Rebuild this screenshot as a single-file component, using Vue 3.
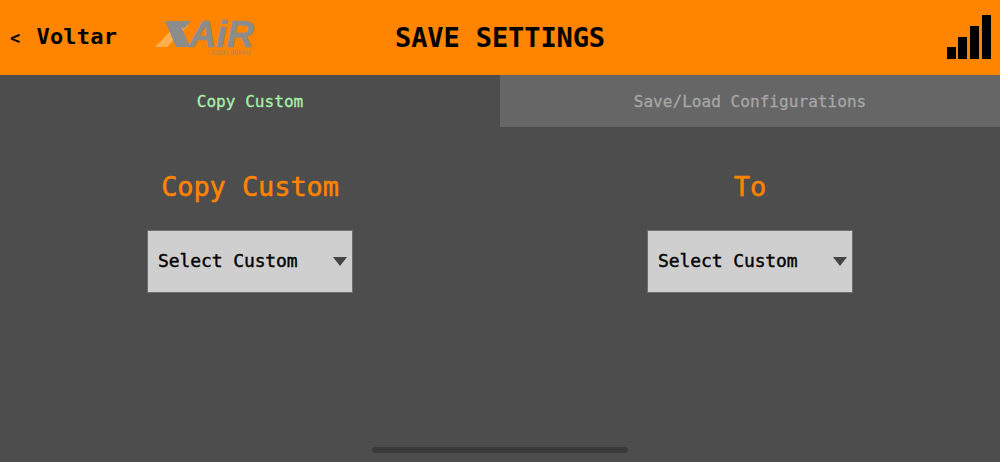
<script setup>
const tabs = [
  { label: 'Copy Custom', active: true },
  { label: 'Save/Load Configurations', active: false }
]
const columns = [
  { title: 'Copy Custom' },
  { title: 'To' }
]
const bars = [
  { x: 0, y: 32, h: 12 },
  { x: 11, y: 22, h: 22 },
  { x: 23, y: 11, h: 33 },
  { x: 35, y: 0, h: 44 }
]
</script>

<template>
  <div class="page">
    <header class="topbar">
      <a class="back"><span class="chevron">&lt;</span>Voltar</a>
      <svg class="logo" width="110" height="60" viewBox="0 -10 110 60">
        <polygon points="0,27 12,27 33,6 25,1" fill="#ffb04d" />
        <polygon points="10,1 24,1 35,27 21,27" fill="#8c8c8c" />
        <polygon points="24,1 36,1 29,9 25,6" fill="#8c8c8c" />
        <text x="34" y="27" textLength="65" lengthAdjust="spacingAndGlyphs" class="logo-word">AiR</text>
        <text x="55" y="35" textLength="41" lengthAdjust="spacingAndGlyphs" class="logo-small">32bits 96KHz</text>
      </svg>
      <h1 class="title">SAVE SETTINGS</h1>
      <svg class="signal" width="44" height="44" viewBox="0 0 44 44">
        <rect v-for="b in bars" :key="b.x" :x="b.x" :y="b.y" width="9" :height="b.h" fill="#000" />
      </svg>
    </header>

    <nav class="tabs">
      <div v-for="tab in tabs" :key="tab.label" class="tab" :class="{ active: tab.active }">{{ tab.label }}</div>
    </nav>

    <main class="columns">
      <section v-for="col in columns" :key="col.title" class="column">
        <h2 class="col-title">{{ col.title }}</h2>
        <div class="select">
          <span class="select-label">Select Custom</span>
          <i class="caret"></i>
        </div>
      </section>
    </main>

    <div class="home-bar"></div>
  </div>
</template>

<style>
html, body {
  margin: 0;
  background: #4d4d4d;
}
</style>

<style scoped>
.page {
  position: relative;
  width: 1000px;
  height: 462px;
  overflow: hidden;
  background: #4d4d4d;
  font-family: "DejaVu Sans Mono", "Liberation Mono", monospace;
}

.topbar {
  position: relative;
  height: 75px;
  background: #ff8400;
  display: flex;
  align-items: center;
  color: #000;
}

.back {
  display: flex;
  align-items: baseline;
  margin-left: 10px;
  font-size: 22px;
  font-weight: 700;
  letter-spacing: 0.2px;
  line-height: 74px;
}

.chevron {
  font-size: 17px;
  margin-right: 16px;
}

.logo {
  position: absolute;
  left: 155px;
  top: 10px;
}

.logo-word {
  font-family: "Liberation Sans", sans-serif;
  font-weight: 700;
  font-style: italic;
  font-size: 36px;
  fill: #8c8c8c;
  stroke: #8c8c8c;
  stroke-width: 0.6px;
}

.logo-small {
  font-family: "Liberation Sans", sans-serif;
  font-style: italic;
  font-size: 7px;
  fill: #a88a5c;
}

.title {
  position: absolute;
  left: 0;
  right: 0;
  margin: 0;
  text-align: center;
  font-size: 27px;
  font-weight: 700;
  letter-spacing: -0.1px;
  line-height: 73px;
}

.signal {
  position: absolute;
  left: 947px;
  top: 15px;
}

.tabs {
  display: flex;
  height: 52px;
}

.tab {
  flex: 1;
  display: flex;
  align-items: center;
  justify-content: center;
  font-size: 16.1px;
  background: #666666;
  color: #a6a6a6;
  -webkit-text-stroke: 0.3px currentColor;
}

.tab.active {
  background: #4d4d4d;
  color: #a9f0a9;
}

.columns {
  display: flex;
}

.column {
  flex: 1;
  display: flex;
  flex-direction: column;
  align-items: center;
}

.col-title {
  margin: 40px 0 0;
  font-size: 27px;
  font-weight: 400;
  letter-spacing: -0.1px;
  line-height: 40px;
  color: #ff8400;
  -webkit-text-stroke: 0.5px currentColor;
}

.select {
  margin-top: 23px;
  box-sizing: border-box;
  width: 206px;
  height: 63px;
  padding: 0 12px 0 10px;
  display: flex;
  align-items: center;
  justify-content: space-between;
  background: #cfcfcf;
  border: 1px solid #6e6e6e;
  color: #000;
  font-size: 18px;
}

.select-label {
  margin-bottom: 3px;
  letter-spacing: -0.1px;
  -webkit-text-stroke: 0.4px currentColor;
}

.caret {
  width: 0;
  height: 0;
  border-left: 7px solid transparent;
  border-right: 7px solid transparent;
  border-top: 9px solid #444;
  margin-right: -7px;
}

.home-bar {
  position: absolute;
  left: 372px;
  top: 447px;
  width: 256px;
  height: 6px;
  border-radius: 3px;
  background: #3a3a3a;
}
</style>
